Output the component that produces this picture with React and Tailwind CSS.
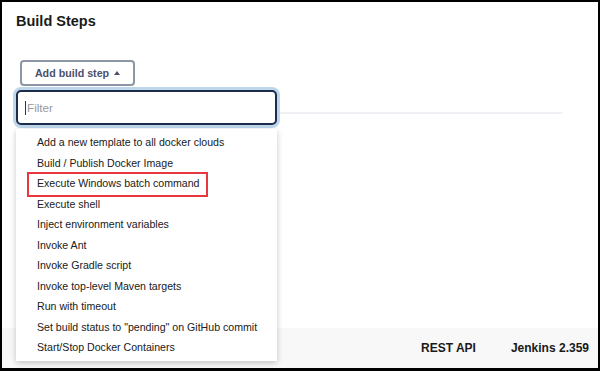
const steps = [
  "Add a new template to all docker clouds",
  "Build / Publish Docker Image",
  "Execute Windows batch command",
  "Execute shell",
  "Inject environment variables",
  "Invoke Ant",
  "Invoke Gradle script",
  "Invoke top-level Maven targets",
  "Run with timeout",
  'Set build status to "pending" on GitHub commit',
  "Start/Stop Docker Containers",
];

export default function App() {
  return (
    <div className="flex h-[371px] w-[600px] flex-col border-t-2 border-r-2 border-b-[3px] border-l-2 border-black bg-white font-['Liberation_Sans',Arial,sans-serif] text-[#1a1a1a]">
      <section className="relative flex-1 pl-[14px] pt-[11px]">
        <h2 className="text-[14.5px] font-bold leading-[16px]">Build Steps</h2>

        <button className="ml-[4px] mt-[31px] flex h-[26px] w-[115px] items-center justify-center gap-[5px] rounded-[4px] border-2 border-[#8d96a5] bg-white text-[10.7px] font-bold text-[#4b4f6b]">
          Add build step
          <span className="mt-[-1px] h-0 w-0 border-x-[3.5px] border-b-[4px] border-x-transparent border-b-[#4b4f6b]" />
        </button>

        <div className="mt-[26px] h-[2px] w-[546px] bg-[#eff0f4]" />

        {/* open menu */}
        <div className="absolute left-[11px] top-[85px] z-10 w-[267px]">
          <div className="rounded-[8px] bg-[#bfd7ea] p-[3px]">
            <div className="flex h-[35px] items-center rounded-[5px] border-2 border-[#1c2c4c] bg-white pl-[7px]">
              <span className="h-[14px] w-[1px] bg-[#333]" />
              <span className="ml-[1px] text-[11.7px] text-[#9a9a9a]">Filter</span>
            </div>
          </div>
          <ul className="ml-[3px] mt-[1px] w-[261px] bg-white pb-[2px] pt-[4px] shadow-[0_2px_6px_rgba(0,0,0,0.22)]">
            {steps.map((s, i) => (
              <li
                key={s}
                className="relative flex h-[20.5px] items-center pl-[21px] text-[10.6px] text-[#202020]"
              >
                {s}
                {i === 2 && (
                  <span className="absolute left-[11px] top-[-2px] h-[25px] w-[181px] border-2 border-[#e8383f]" />
                )}
              </li>
            ))}
          </ul>
        </div>
      </section>

      <footer className="flex h-[40px] items-center justify-end gap-[35px] bg-[#f8f8f8] pr-[9px] text-[12px] font-bold text-[#1a1a1a]">
        <span>REST API</span>
        <span>Jenkins 2.359</span>
      </footer>
    </div>
  );
}
